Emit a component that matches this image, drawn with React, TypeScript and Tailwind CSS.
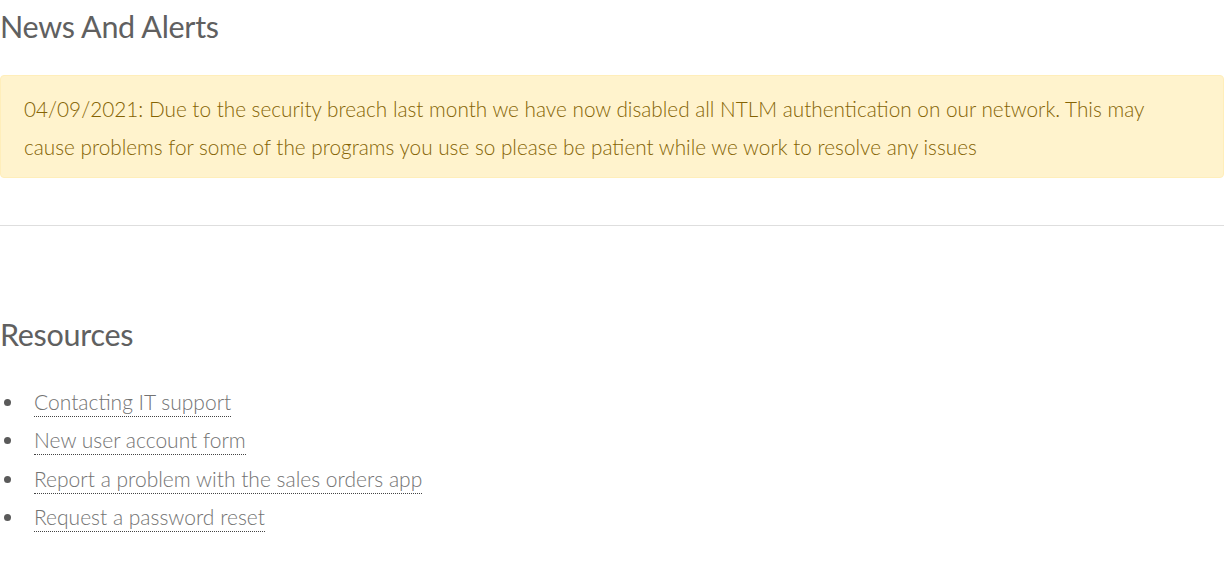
export default function App() {
  const links = [
    "Contacting IT support",
    "New user account form",
    "Report a problem with the sales orders app",
    "Request a password reset",
  ];
  return (
    <div className="w-[1224px] bg-white font-['Lato','Open_Sans',sans-serif] font-light">
      <h1 className="text-[30.5px] leading-[40px] pt-[6px] tracking-[-0.3px] font-normal text-[#606060]">News And Alerts</h1>
      <div className="mt-[29px] bg-[#fff3cd] border border-[#ffeeba] rounded-[4px] px-[23px] pt-[14px] pb-[11px] text-[#856404] text-[20.75px] leading-[38px]">
        04/09/2021: Due to the security breach last month we have now disabled all NTLM authentication on our network. This may cause problems for some of the programs you use so please be patient while we work to resolve any issues
      </div>
      <hr className="mt-[47px] border-0 border-t border-[#dedede]" />
      <h2 className="mt-[88px] text-[30.5px] leading-[40px] tracking-[-0.3px] font-normal text-[#606060]">Resources</h2>
      <ul className="mt-[29px] text-[21px]">
        {links.map((l) => (
          <li key={l} className="flex items-center h-[38.5px]">
            <span className="w-[34px] flex items-center">
              <span className="ml-[4px] w-[7px] h-[7px] rounded-full bg-[#5a5a5a]" />
            </span>
            <a href="#" className="leading-[28px] text-[#737373] border-b border-dotted border-[#444]">{l}</a>
          </li>
        ))}
      </ul>
    </div>
  );
}
